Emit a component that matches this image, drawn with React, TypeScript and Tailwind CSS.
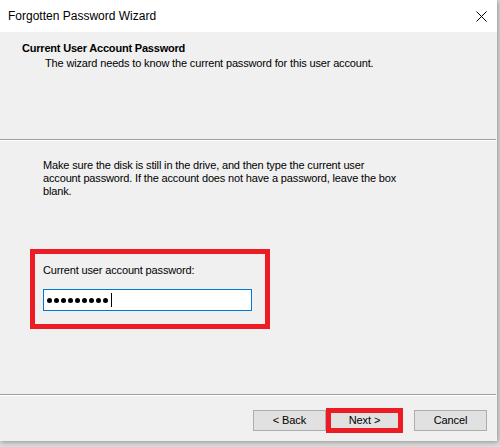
import React from "react";

const ui = { fontFamily: '"Liberation Sans", Arial, sans-serif' };

function Btn({ children }: { children: React.ReactNode }) {
  return (
    <div className="w-[73px] h-[21px] bg-[#e1e1e1] border border-[#adadad] flex items-center justify-center text-[11px] text-black tracking-[-0.1px]">
      {children}
    </div>
  );
}

export default function App() {
  return (
    <div className="w-[500px] h-[447px] bg-[#dcdcdc] overflow-hidden" style={ui}>
      <div className="w-[497px] h-[441px] bg-[#f0f0f0] flex flex-col shadow-[1px_1px_5px_rgba(0,0,0,0.35)]">
        {/* Title bar */}
        <div className="h-[32px] bg-white flex items-center justify-between pl-[8px] pr-[10px]">
          <span className="text-[12px] text-black leading-none">
            Forgotten Password Wizard
          </span>
          <svg width="11" height="11" viewBox="0 0 11 11">
            <path d="M0.5 0.5 L10.5 10.5 M10.5 0.5 L0.5 10.5" stroke="#000" strokeWidth="1" />
          </svg>
        </div>

        {/* Header */}
        <div className="h-[107px] pt-[9px] pl-[22px] flex flex-col">
          <div className="text-[11px] font-bold leading-[14px] text-black tracking-[-0.2px]">
            Current User Account Password
          </div>
          <div className="text-[11px] leading-[14px] text-black pl-[23px] mt-[1px] tracking-[-0.15px]">
            The wizard needs to know the current password for this user account.
          </div>
        </div>
        <div className="h-[2px] mr-[1px] border-t border-[#a0a0a0] border-b border-b-white" />

        {/* Body */}
        <div className="flex-1 flex flex-col">
          <div className="pl-[43px] pt-[18px] text-[11px] leading-[13px] text-black tracking-[-0.15px] whitespace-nowrap">
            Make sure the disk is still in the drive, and then type the current user
            <br />
            account password. If the account does not have a password, leave the box
            <br />
            blank.
          </div>
          <div className="ml-[30px] mt-[51px] w-[240px] h-[80px] border-[5px] border-[#ed1c24] pl-[8px] pt-[10px] flex flex-col">
            <div className="text-[11px] leading-[13px] text-black tracking-[-0.15px]">
              Current user account password:
            </div>
            <div className="mt-[12px] w-[209px] h-[22px] border border-[#0078d7] bg-white flex items-center pl-[3px] gap-[2px]">
              {Array.from({ length: 9 }).map((_, i) => (
                <span key={i} className="w-[5px] h-[5px] rounded-full bg-black" />
              ))}
              <span className="w-[1px] h-[14px] bg-black ml-[1px]" />
            </div>
          </div>
        </div>

        <div className="h-[2px] mr-[1px] border-t border-[#a0a0a0] border-b border-b-white" />
        {/* Buttons */}
        <div className="h-[45px] flex items-start justify-end pr-[10px] pt-[12px]">
          <div className="mt-[2px]">
            <Btn>&lt; Back</Btn>
          </div>
          <div className="relative w-[77px] h-[25px]">
            <div className="absolute left-[2px] top-[2px]">
              <Btn>Next &gt;</Btn>
            </div>
            <div className="absolute inset-0 border-[5px] border-[#ed1c24]" />
          </div>
          <div className="mt-[2px] ml-[11px]">
            <Btn>Cancel</Btn>
          </div>
        </div>
      </div>
    </div>
  );
}
